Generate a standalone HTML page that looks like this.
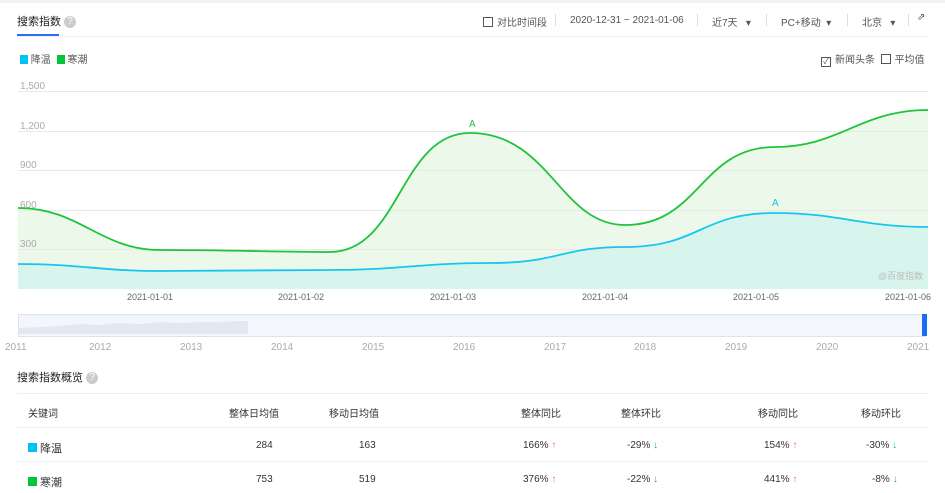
<!DOCTYPE html>
<html><head><meta charset="utf-8"><style>
body{margin:0;width:945px;height:493px;background:#fff;font-family:"Liberation Sans","Noto Sans CJK SC",sans-serif;position:relative;overflow:hidden;color:#333}
.a{position:absolute;white-space:nowrap}
.s{font-size:10px;color:#555}
.q{display:inline-block;width:12px;height:12px;border-radius:50%;background:#ccc;color:#fff;font-size:10px;text-align:center;line-height:12px;vertical-align:middle}
.cb{display:inline-block;width:8px;height:8px;border:1px solid #555;vertical-align:-1px;margin-right:4px;font-size:8px;line-height:8px;text-align:center}
.sep{position:absolute;top:14px;width:1px;height:12px;background:#ddd}
.th{font-size:10px;color:#333}
.up{color:#f4704f;font-size:10px}.dn{color:#1bb38b;font-size:10px}
</style></head><body>
<div class="a" style="left:0;top:0;width:945px;height:3px;background:#f2f2f2"></div>
<div class="a" style="left:17px;top:13px;font-size:11px;color:#222">搜索指数 <span class="q">?</span></div>
<div class="a" style="left:17px;top:34px;width:42px;height:2px;background:#2b6ef6"></div>
<div class="a" style="left:17px;top:36px;width:911px;height:1px;background:#eee"></div>
<div class="a s" style="left:483px;top:14px"><span class="cb"></span>对比时间段</div>
<div class="sep" style="left:555px"></div>
<div class="a s" style="left:570px;top:15px">2020-12-31 ~ 2021-01-06</div>
<div class="sep" style="left:697px"></div>
<div class="a s" style="left:712px;top:14px">近7天 &nbsp;&nbsp;▾</div>
<div class="sep" style="left:766px"></div>
<div class="a s" style="left:781px;top:14px">PC+移动 &nbsp;▾</div>
<div class="sep" style="left:847px"></div>
<div class="a s" style="left:862px;top:14px">北京 &nbsp;&nbsp;▾</div>
<div class="sep" style="left:908px"></div>
<div class="a s" style="left:917px;top:12px">⇗</div>
<div class="a s" style="left:20px;top:51px"><span style="display:inline-block;width:8px;height:9px;background:#00c3f5;vertical-align:-1px"></span> 降温 <span style="display:inline-block;width:8px;height:9px;background:#00c53b;vertical-align:-1px;margin-left:3px"></span> 寒潮</div>
<div class="a s" style="left:821px;top:51px;font-size:10px"><span class="cb">✓</span>新闻头条 &nbsp;<span class="cb"></span>平均值</div>
<svg class="a" style="left:0;top:0" width="945" height="360">
<path d="M18 208 C80 208 100 250 160 250 C230 250 280 252 330 252 C400 252 400 133 470 133 C550 133 560 225 625 225 C700 225 700 147 775 147 C840 147 860 110 928 110 L928 289 L18 289Z" fill="#ebf8ea"/>
<path d="M18 264 C80 264 100 271 160 271 C230 271 280 270 330 270 C400 270 420 263 490 263 C560 263 560 247 625 247 C700 247 700 213 775 213 C840 213 860 227 928 227 L928 289 L18 289Z" fill="#d8f5ed"/>
<g stroke="#e8e8e8" stroke-width="1"><line x1="18" x2="928" y1="91.5" y2="91.5"/><line x1="18" x2="928" y1="131.5" y2="131.5"/><line x1="18" x2="928" y1="170.5" y2="170.5"/><line x1="18" x2="928" y1="210.5" y2="210.5"/><line x1="18" x2="928" y1="249.5" y2="249.5"/></g>
<g font-size="10" fill="#aaa" font-family="Liberation Sans"><text x="20" y="89">1,500</text><text x="20" y="129">1,200</text><text x="20" y="168">900</text><text x="20" y="208">600</text><text x="20" y="247">300</text></g>
<path d="M18 208 C80 208 100 250 160 250 C230 250 280 252 330 252 C400 252 400 133 470 133 C550 133 560 225 625 225 C700 225 700 147 775 147 C840 147 860 110 928 110" fill="none" stroke="#1fc43b" stroke-width="1.8"/>
<path d="M18 264 C80 264 100 271 160 271 C230 271 280 270 330 270 C400 270 420 263 490 263 C560 263 560 247 625 247 C700 247 700 213 775 213 C840 213 860 227 928 227" fill="none" stroke="#17c6f0" stroke-width="1.8"/>
<text x="469" y="127" font-size="10" fill="#1fc43b">A</text><text x="772" y="206" font-size="10" fill="#17c6f0">A</text>
<text x="878" y="279" font-size="9" fill="#bbb">@百度指数</text>
<g font-size="9" fill="#666" font-family="Liberation Sans"><text x="127" y="300">2021-01-01</text><text x="278" y="300">2021-01-02</text><text x="430" y="300">2021-01-03</text><text x="582" y="300">2021-01-04</text><text x="733" y="300">2021-01-05</text><text x="885" y="300">2021-01-06</text></g>
<rect x="18.5" y="314.5" width="907" height="22" fill="#f3f7fd" stroke="#dde3ee"/>
<path d="M19 334 L19 328 L40 327 L60 326 L80 324 L100 325 L120 323 L140 324 L160 322 L180 323 L200 322 L220 322 L240 321 L248 321 L248 334Z" fill="#e3e8f0"/>
<rect x="922" y="314" width="5" height="22" fill="#1a6ef5"/>
<g font-size="10" fill="#aaa" font-family="Liberation Sans"><text x="5" y="350">2011</text><text x="89" y="350">2012</text><text x="180" y="350">2013</text><text x="271" y="350">2014</text><text x="362" y="350">2015</text><text x="453" y="350">2016</text><text x="544" y="350">2017</text><text x="634" y="350">2018</text><text x="725" y="350">2019</text><text x="816" y="350">2020</text><text x="907" y="350">2021</text></g>
</svg>
<div class="a" style="left:17px;top:369px;font-size:11px;color:#222">搜索指数概览 <span class="q">?</span></div>
<div class="a" style="left:17px;top:393px;width:911px;height:1px;background:#eee"></div>
<div class="a" style="left:17px;top:427px;width:911px;height:1px;background:#f0f0f0"></div>
<div class="a" style="left:17px;top:461px;width:911px;height:1px;background:#f0f0f0"></div>
<div class="a th" style="left:28px;top:405px">关键词</div>
<div class="a th" style="left:229px;top:405px">整体日均值</div>
<div class="a th" style="left:329px;top:405px">移动日均值</div>
<div class="a th" style="left:521px;top:405px">整体同比</div>
<div class="a th" style="left:621px;top:405px">整体环比</div>
<div class="a th" style="left:758px;top:405px">移动同比</div>
<div class="a th" style="left:861px;top:405px">移动环比</div>
<div class="a" style="left:28px;top:440px;font-size:11px"><span style="display:inline-block;width:9px;height:9px;background:#00c3f5"></span> 降温</div>
<div class="a th" style="left:256px;top:440px">284</div><div class="a th" style="left:359px;top:440px">163</div>
<div class="a th" style="left:523px;top:440px">166% <span class="up">↑</span></div><div class="a th" style="left:627px;top:440px">-29% <span class="dn">↓</span></div>
<div class="a th" style="left:764px;top:440px">154% <span class="up">↑</span></div><div class="a th" style="left:866px;top:440px">-30% <span class="dn">↓</span></div>
<div class="a" style="left:28px;top:474px;font-size:11px"><span style="display:inline-block;width:9px;height:9px;background:#00c53b"></span> 寒潮</div>
<div class="a th" style="left:256px;top:474px">753</div><div class="a th" style="left:359px;top:474px">519</div>
<div class="a th" style="left:523px;top:474px">376% <span class="up">↑</span></div><div class="a th" style="left:627px;top:474px">-22% <span class="dn">↓</span></div>
<div class="a th" style="left:764px;top:474px">441% <span class="up">↑</span></div><div class="a th" style="left:872px;top:474px">-8% <span class="dn">↓</span></div>
</body></html>
